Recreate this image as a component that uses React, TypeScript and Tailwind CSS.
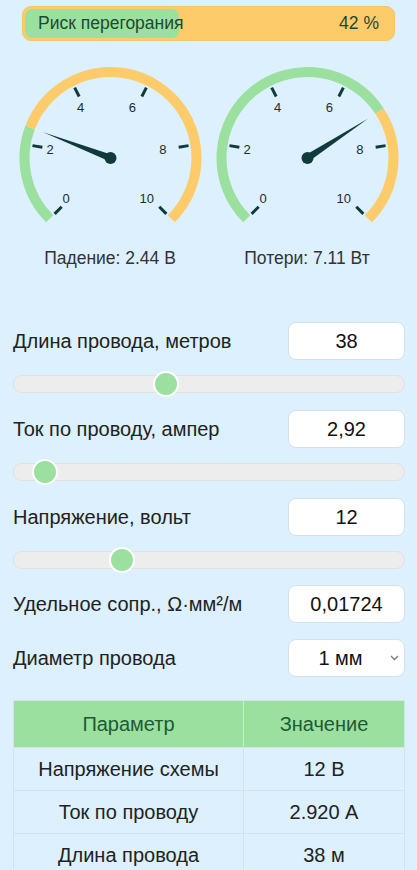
import React from "react";

const GREEN = "#9be09e";
const ORANGE = "#fecb6a";
const DARK = "#113a3d";

function polar(cx: number, cy: number, r: number, deg: number) {
  const a = (deg * Math.PI) / 180;
  return { x: cx + r * Math.sin(a), y: cy - r * Math.cos(a) };
}

function arcPath(cx: number, cy: number, r: number, a1: number, a2: number) {
  const s = polar(cx, cy, r, a1);
  const e = polar(cx, cy, r, a2);
  const large = a2 - a1 > 180 ? 1 : 0;
  return `M ${s.x} ${s.y} A ${r} ${r} 0 ${large} 1 ${e.x} ${e.y}`;
}

function Gauge({ value, label }: { value: number; label: string }) {
  const cx = 98.5;
  const cy = 100;
  const start = -135;
  const end = 135;
  const ang = start + (value / 10) * (end - start);
  const ticks = [0, 2, 4, 6, 8, 10];
  const tip = polar(cx, cy, 72, ang);
  const b1 = polar(cx, cy, 3.5, ang - 90);
  const b2 = polar(cx, cy, 3.5, ang + 90);
  return (
    <div className="flex w-[197px] flex-col items-center">
      <svg width="197" height="170" viewBox="0 0 197 170">
        <path d={arcPath(cx, cy, 86, start, ang)} stroke={GREEN} strokeWidth="10" fill="none" />
        <path d={arcPath(cx, cy, 86, ang, end)} stroke={ORANGE} strokeWidth="10" fill="none" />
        {ticks.map((t) => {
          const a = start + (t / 10) * (end - start);
          const p1 = polar(cx, cy, 69, a);
          const p2 = polar(cx, cy, 79, a);
          const lp = polar(cx, cy, 57, a);
          return (
            <g key={t}>
              <line x1={p1.x} y1={p1.y} x2={p2.x} y2={p2.y} stroke={DARK} strokeWidth="3" />
              <text
                x={lp.x - 4}
                y={lp.y}
                textAnchor="middle"
                dominantBaseline="central"
                fontSize="13"
                fill="#1f2d30"
                fontFamily='"Liberation Sans", Arial, sans-serif'
              >
                {t}
              </text>
            </g>
          );
        })}
        <polygon points={`${b1.x},${b1.y} ${tip.x},${tip.y} ${b2.x},${b2.y}`} fill={DARK} />
        <circle cx={cx} cy={cy} r="6" fill={DARK} />
      </svg>
      <div className="mt-[20px] text-[17.5px] leading-[20px] text-[#333]">{label}</div>
    </div>
  );
}

function NumberField({ value }: { value: string }) {
  return (
    <div className="flex h-[38px] w-[117px] items-center justify-center rounded-[8px] border border-[#d2e2ec] bg-white text-[20px] text-[#111]">
      {value}
    </div>
  );
}

function Slider({ fraction }: { fraction: number }) {
  return (
    <div className="relative mt-[15px] h-[18px] w-full rounded-full border border-[#e1e1e1] bg-[#ededed]">
      <div
        className="absolute top-1/2 h-[26px] w-[26px] -translate-y-1/2 rounded-full border-2 border-white bg-[#9be09e]"
        style={{ left: `calc(${fraction} * (100% - 26px))` }}
      />
    </div>
  );
}

function Row({ label, children }: { label: string; children: React.ReactNode }) {
  return (
    <div className="flex items-center justify-between">
      <span className="text-[20px] text-[#222]">{label}</span>
      {children}
    </div>
  );
}

export default function App() {
  const rows: [string, string][] = [
    ["Напряжение схемы", "12 В"],
    ["Ток по проводу", "2.920 А"],
    ["Длина провода", "38 м"],
  ];
  return (
    <div
      className="min-h-[870px] w-full overflow-hidden bg-[#dcf0fd] pt-[6px]"
      style={{ fontFamily: '"Liberation Sans", Arial, sans-serif' }}
    >
      {/* burnout risk bar */}
      <div className="mx-[22px] h-[35px] rounded-[9px] border border-[#f3c468] bg-[#fecb6a] p-[2px]">
        <div className="relative h-full">
          <div className="h-full w-[42%] rounded-[7px] bg-[#9be09e]" />
          <div className="absolute inset-0 flex items-center justify-between px-[13px] text-[17.5px] text-[#1c4a33]">
            <span>Риск перегорания</span>
            <span>42 %</span>
          </div>
        </div>
      </div>

      {/* gauges */}
      <div className="mt-[17px] flex justify-center">
        <Gauge value={2.44} label="Падение: 2.44 В" />
        <Gauge value={7.11} label="Потери: 7.11 Вт" />
      </div>

      {/* inputs */}
      <div className="mt-[54px] pl-[13px] pr-[12px]">
        <Row label="Длина провода, метров">
          <NumberField value="38" />
        </Row>
        <Slider fraction={0.383} />
        <div className="mt-[17px]">
          <Row label="Ток по проводу, ампер">
            <NumberField value="2,92" />
          </Row>
        </div>
        <Slider fraction={0.049} />
        <div className="mt-[17px]">
          <Row label="Напряжение, вольт">
            <NumberField value="12" />
          </Row>
        </div>
        <Slider fraction={0.26} />
        <div className="mt-[16px]">
          <Row label="Удельное сопр., Ω·мм²/м">
            <NumberField value="0,01724" />
          </Row>
        </div>
        <div className="mt-[16px]">
          <Row label="Диаметр провода">
            <div className="relative flex h-[38px] w-[117px] items-center justify-center rounded-[8px] border border-[#d2e2ec] bg-white pr-[12px] text-[20px] text-[#111]">
              1 мм
              <svg
                className="absolute right-[5px] top-1/2 -translate-y-1/2"
                width="9"
                height="6"
                viewBox="0 0 9 6"
              >
                <path d="M1 1 L4.5 4.5 L8 1" stroke="#777" strokeWidth="1.3" fill="none" />
              </svg>
            </div>
          </Row>
        </div>

        {/* results table */}
        <table className="mt-[23px] w-full border-collapse text-[20px]">
          <thead>
            <tr className="bg-[#9be09e] text-[#1d5a37]">
              <th className="h-[47px] w-[230px] border border-[#d4e3ea] font-normal">Параметр</th>
              <th className="h-[47px] border border-[#d4e3ea] font-normal">Значение</th>
            </tr>
          </thead>
          <tbody>
            {rows.map(([k, v]) => (
              <tr key={k} className="text-[#222]">
                <td className="h-[43px] border border-[#d4e3ea] text-center">{k}</td>
                <td className="h-[43px] border border-[#d4e3ea] text-center">{v}</td>
              </tr>
            ))}
          </tbody>
        </table>
      </div>
    </div>
  );
}
